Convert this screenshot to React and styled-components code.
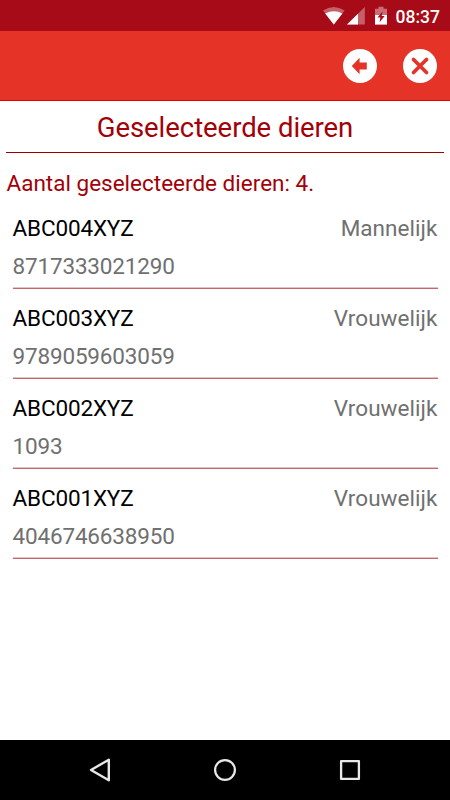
import React from 'react';
import styled, { createGlobalStyle } from 'styled-components';

const GlobalStyle = createGlobalStyle`
  body {
    margin: 0;
    background-color: #ffffff;
    font-family: Roboto, sans-serif;
  }
  * {
    box-sizing: border-box;
  }
`;

const Screen = styled.div`
  display: flex;
  flex-direction: column;
  width: 450px;
  height: 800px;
  background-color: #ffffff;
`;

const StatusBar = styled.div`
  display: flex;
  align-items: center;
  justify-content: flex-end;
  height: 31px;
  padding-right: 10px;
  background-color: #a60b17;
  svg {
    display: block;
  }
`;

const Clock = styled.span`
  margin-left: 8px;
  padding-top: 2px;
  color: #ffffff;
  font-size: 17.5px;
  font-weight: 500;
  line-height: 20px;
`;

const Toolbar = styled.header`
  display: flex;
  align-items: center;
  justify-content: flex-end;
  gap: 26px;
  height: 70px;
  padding-right: 13px;
  border-bottom: 1px solid #e00505;
  background-color: #e53328;
`;

const RoundButton = styled.button`
  width: 34px;
  height: 34px;
  padding: 0;
  border: 0;
  border-radius: 50%;
  background-color: #ffffff;
  svg {
    display: block;
  }
`;

const Content = styled.main`
  flex: 1;
  padding: 0 6px;
`;

const Title = styled.h1`
  height: 52px;
  margin: 0;
  border-bottom: 1px solid #990000;
  color: #a30008;
  font-size: 27.5px;
  font-weight: 400;
  letter-spacing: -0.05px;
  line-height: 53px;
  text-align: center;
`;

const Summary = styled.p`
  margin: 15px 0 0 0.5px;
  color: #a30008;
  font-size: 22.5px;
  line-height: 31px;
`;

const List = styled.ul`
  margin: 0;
  padding: 0 6.5px;
  list-style: none;
`;

const Row = styled.li`
  height: 90px;
  padding-top: 10px;
  border-bottom: 1px solid #c8646a;
  box-shadow: inset 0 -1px #dcc6c7;
  font-size: 22.5px;
  line-height: 38px;
`;

const RowHead = styled.div`
  display: flex;
  justify-content: space-between;
`;

const Name = styled.div`
  color: #000000;
  letter-spacing: -0.15px;
`;

const Gender = styled.div`
  color: #707070;
  letter-spacing: 0.05px;
`;

const Number = styled.div`
  color: #707070;
  letter-spacing: -0.17px;
`;

const NavBar = styled.nav`
  display: flex;
  align-items: center;
  justify-content: center;
  gap: 95px;
  height: 60px;
  background-color: #000000;
  svg {
    display: block;
  }
`;

const animals = [
  { name: 'ABC004XYZ', number: '8717333021290', gender: 'Mannelijk' },
  { name: 'ABC003XYZ', number: '9789059603059', gender: 'Vrouwelijk' },
  { name: 'ABC002XYZ', number: '1093', gender: 'Vrouwelijk' },
  { name: 'ABC001XYZ', number: '4046746638950', gender: 'Vrouwelijk' },
];

const StatusIcons = () => (
  <svg width="66" height="31" viewBox="322 0 66 31" fill="#ffffff">
    <path d="M323 10.6Q333.8 3.2 344.6 10.6L333.8 24.6Z" opacity="0.35" />
    <path d="M325.2 13.5Q333.8 9 342.4 13.5L333.8 24.6Z" />
    <path d="M364.8 7V24.6H347Z" opacity="0.35" />
    <path d="M358 13.8V24.6H347Z" />
    <path d="M378.5 6.7H383.5V8.7H387V15H375V8.7H378.5Z" opacity="0.4" />
    <path d="M375 15H387V24.6H375Z" />
    <path d="M382.6 11.5L377.5 17.6H380.4L379.6 22.2L384.7 16H381.7Z" fill="#a60b17" />
  </svg>
);

const Animal = ({ name, number, gender }) => (
  <Row>
    <RowHead>
      <Name>{name}</Name>
      <Gender>{gender}</Gender>
    </RowHead>
    <Number>{number}</Number>
  </Row>
);

const App = () => (
  <Screen>
    <GlobalStyle />
    <StatusBar>
      <StatusIcons />
      <Clock>08:37</Clock>
    </StatusBar>
    <Toolbar>
      <RoundButton aria-label="Terug">
        <svg width="34" height="34" viewBox="0 0 34 34">
          <path d="M8.8 17L16.6 8.8V13.6H23.8V20.4H16.6V25.2Z" fill="#e53328" />
        </svg>
      </RoundButton>
      <RoundButton aria-label="Sluiten">
        <svg width="34" height="34" viewBox="0 0 34 34">
          <path d="M10.5 10.5L23.5 23.5M23.5 10.5L10.5 23.5" stroke="#e53328" strokeWidth="3.7" strokeLinecap="round" />
        </svg>
      </RoundButton>
    </Toolbar>
    <Content>
      <Title>Geselecteerde dieren</Title>
      <Summary>Aantal geselecteerde dieren: 4.</Summary>
      <List>
        {animals.map(animal => (
          <Animal key={animal.name} {...animal} />
        ))}
      </List>
    </Content>
    <NavBar>
      <svg width="30" height="30" viewBox="0 0 30 30" fill="none" stroke="#e8e8e8" strokeWidth="2.4" strokeLinejoin="round">
        <path d="M6 15L23.8 4.7V25.3Z" />
      </svg>
      <svg width="30" height="30" viewBox="0 0 30 30" fill="none" stroke="#e8e8e8" strokeWidth="2.2">
        <circle cx="15" cy="15" r="9.9" />
      </svg>
      <svg width="30" height="30" viewBox="0 0 30 30" fill="none" stroke="#e8e8e8" strokeWidth="2.3" strokeLinejoin="round">
        <rect x="6.1" y="6.1" width="17.8" height="17.8" />
      </svg>
    </NavBar>
  </Screen>
);

export default App;
